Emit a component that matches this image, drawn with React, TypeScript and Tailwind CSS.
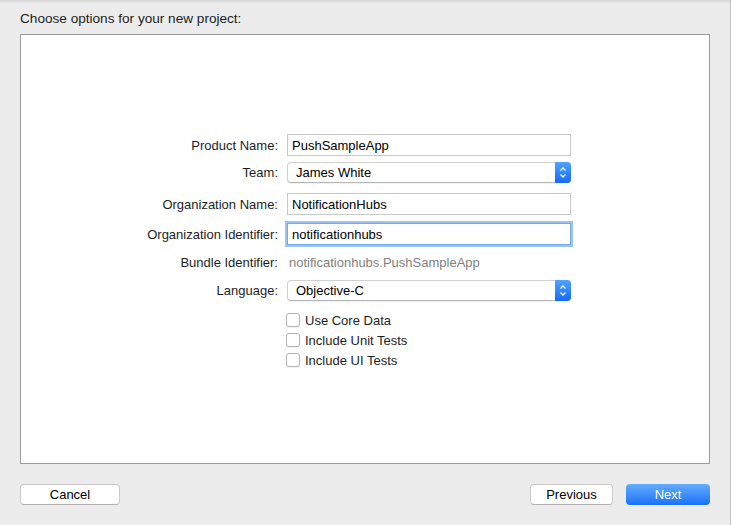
import React from 'react';

const font = { fontFamily: '"Liberation Sans", Arial, sans-serif' };

function Stepper() {
  return (
    <div className="w-[16px] h-full rounded-r-[4px] bg-gradient-to-b from-[#4fa3ff] to-[#1668f8] flex items-center justify-center">
      <svg width="8" height="13" viewBox="0 0 8 13" fill="none">
        <path d="M1.5 4.5 L4 2 L6.5 4.5" stroke="white" strokeWidth="1.3" />
        <path d="M1.5 8.5 L4 11 L6.5 8.5" stroke="white" strokeWidth="1.3" />
      </svg>
    </div>
  );
}

function Row({ label, className, children }: { label: string; className: string; children: React.ReactNode }) {
  return (
    <div className={`flex items-center ${className}`}>
      <div className="w-[257px] pt-px text-right text-[13px] text-[#1d1d1d]">{label}</div>
      <div className="ml-[9px] w-[284px] h-full">{children}</div>
    </div>
  );
}

function TextField({ value, focused }: { value: string; focused?: boolean }) {
  return (
    <div
      className={`h-full w-full flex items-center pl-[4px] pt-px text-[13px] text-black bg-white border ${
        focused ? 'border-[#7aa7e6] shadow-[0_0_0_2px_#9cc3f5]' : 'border-[#c8c8c8]'
      }`}
    >
      {value}
    </div>
  );
}

function Popup({ value }: { value: string }) {
  return (
    <div className="h-full w-full flex items-stretch bg-white rounded-[4px] border border-[#d0d0d0] border-b-[#b5b5b5] shadow-[0_1px_1px_rgba(0,0,0,0.06)]">
      <div className="flex-1 flex items-center pl-[8px] pt-px text-[13px] text-black">{value}</div>
      <div className="-my-px -mr-px">
        <Stepper />
      </div>
    </div>
  );
}

function Checkbox({ label, className }: { label: string; className: string }) {
  return (
    <div className={`flex items-center h-[20px] pl-[265px] ${className}`}>
      <div className="w-[14px] h-[14px] rounded-[3px] border border-[#b3b3b3] bg-white shadow-[0_1px_0_rgba(0,0,0,0.05)]" />
      <span className="ml-[5px] pt-px text-[13px] text-[#1d1d1d]">{label}</span>
    </div>
  );
}

export default function App() {
  return (
    <div className="w-[731px] h-[525px] bg-[#ececec] border-r border-[#c4c4c4]" style={font}>
      <div className="h-[4px] bg-gradient-to-b from-[#d6d6d6] to-[#ececec]" />
      <div className="h-[30px] pt-[6px] px-[20px] text-[13.6px] leading-[18px] text-[#1d1d1d]">
        Choose options for your new project:
      </div>
      <div className="ml-[20px] w-[690px] h-[430px] bg-white border border-[#9b9b9b] pt-[99px]">
        <Row label="Product Name:" className="h-[22px]">
          <TextField value="PushSampleApp" />
        </Row>
        <Row label="Team:" className="h-[21px] mt-[6px]">
          <Popup value="James White" />
        </Row>
        <Row label="Organization Name:" className="h-[22px] mt-[10px]">
          <TextField value="NotificationHubs" />
        </Row>
        <Row label="Organization Identifier:" className="h-[22px] mt-[8px]">
          <TextField value="notificationhubs" focused />
        </Row>
        <Row label="Bundle Identifier:" className="h-[20px] mt-[7px]">
          <div className="h-full flex items-center pl-[2px] pt-px text-[13px] text-[#7f7f7f]">
            notificationhubs.PushSampleApp
          </div>
        </Row>
        <Row label="Language:" className="h-[21px] mt-[8px]">
          <Popup value="Objective-C" />
        </Row>
        <Checkbox label="Use Core Data" className="mt-[9px]" />
        <Checkbox label="Include Unit Tests" className="" />
        <Checkbox label="Include UI Tests" className="" />
      </div>
      <div className="mt-[20px] px-[20px] flex justify-between">
        <button className="w-[100px] h-[21px] rounded-[4px] bg-white border border-[#c9c9c9] border-b-[#b2b2b2] text-[13px] text-black">
          Cancel
        </button>
        <div className="flex gap-[13px]">
          <button className="w-[83px] h-[21px] rounded-[4px] bg-white border border-[#c9c9c9] border-b-[#b2b2b2] text-[13px] text-black">
            Previous
          </button>
          <button className="w-[84px] h-[21px] rounded-[4px] bg-gradient-to-b from-[#63adfd] to-[#1a6ff9] text-[13px] text-white">
            Next
          </button>
        </div>
      </div>
    </div>
  );
}
